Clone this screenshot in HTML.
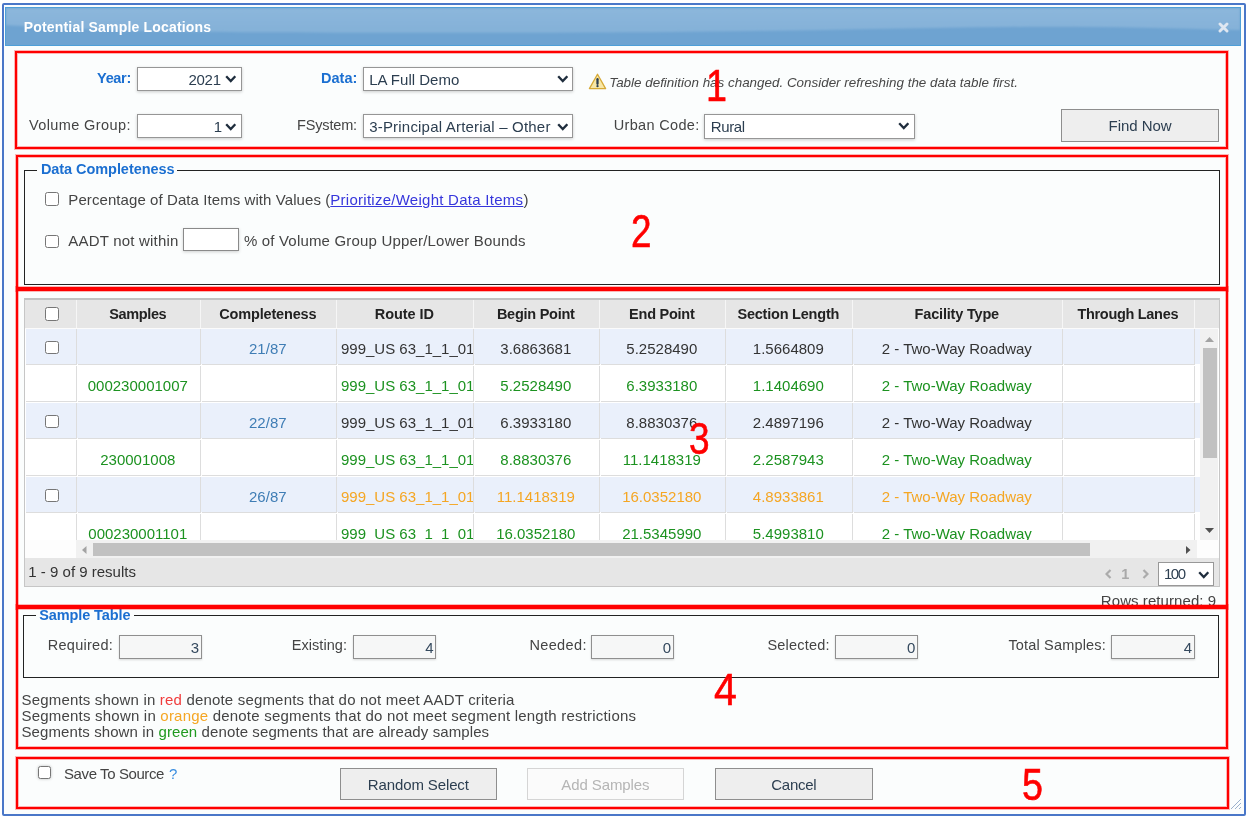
<!DOCTYPE html>
<html><head><meta charset="utf-8"><title>Potential Sample Locations</title>
<style>
html,body{margin:0;padding:0;background:#ffffff;width:1250px;height:816px;overflow:hidden;font-family:"Liberation Sans", sans-serif;}
div,span,svg{box-sizing:content-box;}
</style></head><body>
<div style="position:relative;width:1250px;height:816px;overflow:hidden;will-change:transform">
<div style="position:absolute;left:2px;top:3px;width:1240px;height:809px;border:2px solid #4a77c8;border-radius:2px;background:#fbfdfd;"></div>
<div style="position:absolute;left:5px;top:7px;width:1234px;height:37px;border:1px solid #4e9fd8;background:#6ea3d1;"></div>
<svg style="position:absolute;left:6px;top:8px" width="1234" height="37" viewBox="0 0 1234 37"><defs><linearGradient id="hg" x1="0" y1="0" x2="0" y2="1"><stop offset="0" stop-color="#8cb7db"/><stop offset="1" stop-color="#84b1d8"/></linearGradient><filter id="hb" x="-1%" y="-20%" width="102%" height="140%"><feGaussianBlur stdDeviation="1.1"/></filter></defs><path d="M0 0H1234V22C1150 20 1080 18 1000 19C880 20 760 24 600 24.5C420 25 250 25 140 23C80 21.5 30 19 0 17Z" fill="url(#hg)" filter="url(#hb)"/></svg>
<span style="position:absolute;font-family:'Liberation Sans',sans-serif;top:19.95px;font-size:14.00px;line-height:14.00px;color:#ffffff;font-weight:bold;font-style:normal;white-space:nowrap;letter-spacing:0.184px;left:23.70px;">Potential Sample Locations</span>
<svg style="position:absolute;left:1218px;top:22px" width="11" height="11" viewBox="0 0 11 11"><path d="M2 2L9 9M9 2L2 9" stroke="#dfe7f1" stroke-width="2.9" stroke-linecap="round"/></svg>
<div style="position:absolute;left:137px;top:67px;width:103px;height:22px;border:1px solid #969696;background:#fff;box-shadow:0 1px 3px rgba(0,0,0,0.2);"></div>
<span style="position:absolute;font-family:'Liberation Sans',sans-serif;top:72.10px;font-size:15.00px;line-height:15.00px;color:#2c3e50;font-weight:normal;font-style:normal;white-space:nowrap;letter-spacing:-0.294px;left:188.50px;">2021</span>
<svg style="position:absolute;left:225.4px;top:75px" width="11.5" height="8" viewBox="0 0 11.5 8"><path d="M1.2 1.2L5.75 6L10.3 1.2" fill="none" stroke="#1f2d3d" stroke-width="2.3"/></svg>
<span style="position:absolute;font-family:'Liberation Sans',sans-serif;top:70.93px;font-size:14.50px;line-height:14.50px;color:#1b6fd1;font-weight:bold;font-style:normal;white-space:nowrap;letter-spacing:-0.337px;left:97.10px;">Year:</span>
<span style="position:absolute;font-family:'Liberation Sans',sans-serif;top:70.93px;font-size:14.50px;line-height:14.50px;color:#1b6fd1;font-weight:bold;font-style:normal;white-space:nowrap;letter-spacing:0.007px;left:321.00px;">Data:</span>
<div style="position:absolute;left:363px;top:67px;width:208px;height:22px;border:1px solid #969696;background:#fff;box-shadow:0 1px 3px rgba(0,0,0,0.2);"></div>
<span style="position:absolute;font-family:'Liberation Sans',sans-serif;top:72.10px;font-size:15.00px;line-height:15.00px;color:#2c3e50;font-weight:normal;font-style:normal;white-space:nowrap;letter-spacing:0.000px;left:369.20px;">LA Full Demo</span>
<svg style="position:absolute;left:556.8px;top:75px" width="11.5" height="8" viewBox="0 0 11.5 8"><path d="M1.2 1.2L5.75 6L10.3 1.2" fill="none" stroke="#1f2d3d" stroke-width="2.3"/></svg>
<svg style="position:absolute;left:588px;top:73px" width="19" height="17" viewBox="0 0 19 17"><path d="M9.5 1.3L17.6 15.6H1.4Z" fill="#f8e7a6" stroke="#d6a936" stroke-width="1.3" stroke-linejoin="round"/><path d="M9.5 6.2V10.8" stroke="#2d3e50" stroke-width="2.3" stroke-linecap="round"/><circle cx="9.5" cy="13.2" r="1.15" fill="#2d3e50"/></svg>
<span style="position:absolute;font-family:'Liberation Sans',sans-serif;top:76.46px;font-size:13.40px;line-height:13.40px;color:#474747;font-weight:normal;font-style:italic;white-space:nowrap;letter-spacing:0.009px;left:609.20px;">Table definition has changed. Consider refreshing the data table first.</span>
<span style="position:absolute;font-family:'Liberation Sans',sans-serif;top:117.73px;font-size:14.50px;line-height:14.50px;color:#444444;font-weight:normal;font-style:normal;white-space:nowrap;letter-spacing:0.405px;left:28.90px;">Volume Group:</span>
<div style="position:absolute;left:137px;top:114px;width:103px;height:22px;border:1px solid #969696;background:#fff;box-shadow:0 1px 3px rgba(0,0,0,0.2);"></div>
<span style="position:absolute;font-family:'Liberation Sans',sans-serif;top:118.80px;font-size:15.00px;line-height:15.00px;color:#2c3e50;font-weight:normal;font-style:normal;white-space:nowrap;letter-spacing:0.000px;left:213.80px;">1</span>
<svg style="position:absolute;left:225.4px;top:122.5px" width="11.5" height="8" viewBox="0 0 11.5 8"><path d="M1.2 1.2L5.75 6L10.3 1.2" fill="none" stroke="#1f2d3d" stroke-width="2.3"/></svg>
<span style="position:absolute;font-family:'Liberation Sans',sans-serif;top:118.23px;font-size:14.50px;line-height:14.50px;color:#444444;font-weight:normal;font-style:normal;white-space:nowrap;letter-spacing:-0.154px;left:297.00px;">FSystem:</span>
<div style="position:absolute;left:363px;top:114px;width:208px;height:22px;border:1px solid #969696;background:#fff;box-shadow:0 1px 3px rgba(0,0,0,0.2);"></div>
<span style="position:absolute;font-family:'Liberation Sans',sans-serif;top:119.30px;font-size:15.00px;line-height:15.00px;color:#2c3e50;font-weight:normal;font-style:normal;white-space:nowrap;letter-spacing:0.196px;left:369.20px;">3-Principal Arterial – Other</span>
<svg style="position:absolute;left:556.8px;top:122.5px" width="11.5" height="8" viewBox="0 0 11.5 8"><path d="M1.2 1.2L5.75 6L10.3 1.2" fill="none" stroke="#1f2d3d" stroke-width="2.3"/></svg>
<span style="position:absolute;font-family:'Liberation Sans',sans-serif;top:117.93px;font-size:14.50px;line-height:14.50px;color:#444444;font-weight:normal;font-style:normal;white-space:nowrap;letter-spacing:0.316px;left:613.80px;">Urban Code:</span>
<div style="position:absolute;left:704px;top:114px;width:209px;height:23px;border:1px solid #969696;background:#fff;box-shadow:0 1px 3px rgba(0,0,0,0.2);"></div>
<span style="position:absolute;font-family:'Liberation Sans',sans-serif;top:118.80px;font-size:15.00px;line-height:15.00px;color:#2c3e50;font-weight:normal;font-style:normal;white-space:nowrap;letter-spacing:-0.392px;left:710.80px;">Rural</span>
<svg style="position:absolute;left:897.8px;top:121.5px" width="11.5" height="8" viewBox="0 0 11.5 8"><path d="M1.2 1.2L5.75 6L10.3 1.2" fill="none" stroke="#1f2d3d" stroke-width="2.3"/></svg>
<div style="position:absolute;left:1061px;top:109.4px;width:155.6px;height:31px;border:1px solid #8e8e8e;background:#eeeeee;"></div>
<span style="position:absolute;font-family:'Liberation Sans',sans-serif;top:118.30px;font-size:15.00px;line-height:15.00px;color:#2c3e50;font-weight:normal;font-style:normal;white-space:nowrap;letter-spacing:-0.045px;left:1108.60px;">Find Now</span>
<span style="position:absolute;font-family:'Liberation Sans',sans-serif;top:63.97px;font-size:44.69px;line-height:44.69px;color:#ff0000;font-weight:normal;font-style:normal;white-space:nowrap;letter-spacing:0.000px;transform-origin:0 0;transform:scaleX(0.845);-webkit-text-stroke:0.6px #ff0000;left:706.00px;">1</span>
<div style="position:absolute;left:24px;top:170px;width:1194px;height:113px;border:1px solid #222;"></div>
<div style="position:absolute;left:37px;top:160px;width:140px;height:16px;background:#fbfdfd;"></div>
<span style="position:absolute;font-family:'Liberation Sans',sans-serif;top:162.13px;font-size:14.50px;line-height:14.50px;color:#1b6fd1;font-weight:bold;font-style:normal;white-space:nowrap;letter-spacing:-0.058px;left:40.90px;">Data Completeness</span>
<div style="position:absolute;left:45.2px;top:192.4px;width:11.5px;height:11.5px;border:1px solid #767676;border-radius:2.5px;background:#fff;"></div>
<span style="position:absolute;font-family:'Liberation Sans',sans-serif;top:192.00px;font-size:15.00px;line-height:15.00px;color:#444444;font-weight:normal;font-style:normal;white-space:nowrap;letter-spacing:0.079px;left:68.30px;">Percentage of Data Items with Values (</span>
<span style="position:absolute;font-family:'Liberation Sans',sans-serif;top:192.00px;font-size:15.00px;line-height:15.00px;color:#3636dc;font-weight:normal;font-style:normal;white-space:nowrap;letter-spacing:0.263px;text-decoration:underline;left:330.30px;">Prioritize/Weight Data Items</span>
<span style="position:absolute;font-family:'Liberation Sans',sans-serif;top:192.00px;font-size:15.00px;line-height:15.00px;color:#444444;font-weight:normal;font-style:normal;white-space:nowrap;letter-spacing:0.000px;left:523.50px;">)</span>
<div style="position:absolute;left:45.2px;top:234.6px;width:11.5px;height:11.5px;border:1px solid #767676;border-radius:2.5px;background:#fff;"></div>
<span style="position:absolute;font-family:'Liberation Sans',sans-serif;top:233.00px;font-size:15.00px;line-height:15.00px;color:#444444;font-weight:normal;font-style:normal;white-space:nowrap;letter-spacing:0.195px;left:68.30px;">AADT not within</span>
<div style="position:absolute;left:182.6px;top:228.4px;width:54.4px;height:21.1px;border:1px solid #8a8a8a;background:#fff;box-shadow:0 1px 3px rgba(0,0,0,0.18);"></div>
<span style="position:absolute;font-family:'Liberation Sans',sans-serif;top:233.00px;font-size:15.00px;line-height:15.00px;color:#444444;font-weight:normal;font-style:normal;white-space:nowrap;letter-spacing:0.185px;left:243.90px;">% of Volume Group Upper/Lower Bounds</span>
<span style="position:absolute;font-family:'Liberation Sans',sans-serif;top:208.60px;font-size:45.95px;line-height:45.95px;color:#ff0000;font-weight:normal;font-style:normal;white-space:nowrap;letter-spacing:0.000px;transform-origin:0 0;transform:scaleX(0.802);-webkit-text-stroke:0.6px #ff0000;left:630.70px;">2</span>
<div style="position:absolute;left:24px;top:298px;width:1194px;height:286px;border:1px solid #c6c6c6;border-top:2px solid #c2c2c2;background:#ffffff;"></div>
<div style="position:absolute;left:25px;top:300px;width:1194px;height:28px;background:#e6e6e6;"></div>
<div style="position:absolute;left:76px;top:300px;width:1px;height:28px;background:#f6f6f6;"></div>
<div style="position:absolute;left:200px;top:300px;width:1px;height:28px;background:#f6f6f6;"></div>
<div style="position:absolute;left:336px;top:300px;width:1px;height:28px;background:#f6f6f6;"></div>
<div style="position:absolute;left:473px;top:300px;width:1px;height:28px;background:#f6f6f6;"></div>
<div style="position:absolute;left:599px;top:300px;width:1px;height:28px;background:#f6f6f6;"></div>
<div style="position:absolute;left:725px;top:300px;width:1px;height:28px;background:#f6f6f6;"></div>
<div style="position:absolute;left:852px;top:300px;width:1px;height:28px;background:#f6f6f6;"></div>
<div style="position:absolute;left:1062px;top:300px;width:1px;height:28px;background:#f6f6f6;"></div>
<div style="position:absolute;left:1194px;top:300px;width:1px;height:28px;background:#f6f6f6;"></div>
<div style="position:absolute;left:25px;top:328px;width:1194px;height:1px;background:#fbfbfb;"></div>
<span style="position:absolute;font-family:'Liberation Sans',sans-serif;top:306.83px;font-size:14.50px;line-height:14.50px;color:#222222;font-weight:bold;font-style:normal;white-space:nowrap;letter-spacing:-0.379px;left:137.80px;transform:translateX(-50%);">Samples</span>
<span style="position:absolute;font-family:'Liberation Sans',sans-serif;top:306.83px;font-size:14.50px;line-height:14.50px;color:#222222;font-weight:bold;font-style:normal;white-space:nowrap;letter-spacing:-0.177px;left:267.80px;transform:translateX(-50%);">Completeness</span>
<span style="position:absolute;font-family:'Liberation Sans',sans-serif;top:306.83px;font-size:14.50px;line-height:14.50px;color:#222222;font-weight:bold;font-style:normal;white-space:nowrap;letter-spacing:-0.076px;left:404.30px;transform:translateX(-50%);">Route ID</span>
<span style="position:absolute;font-family:'Liberation Sans',sans-serif;top:306.83px;font-size:14.50px;line-height:14.50px;color:#222222;font-weight:bold;font-style:normal;white-space:nowrap;letter-spacing:-0.251px;left:535.80px;transform:translateX(-50%);">Begin Point</span>
<span style="position:absolute;font-family:'Liberation Sans',sans-serif;top:306.83px;font-size:14.50px;line-height:14.50px;color:#222222;font-weight:bold;font-style:normal;white-space:nowrap;letter-spacing:-0.252px;left:661.80px;transform:translateX(-50%);">End Point</span>
<span style="position:absolute;font-family:'Liberation Sans',sans-serif;top:306.83px;font-size:14.50px;line-height:14.50px;color:#222222;font-weight:bold;font-style:normal;white-space:nowrap;letter-spacing:-0.217px;left:788.30px;transform:translateX(-50%);">Section Length</span>
<span style="position:absolute;font-family:'Liberation Sans',sans-serif;top:306.83px;font-size:14.50px;line-height:14.50px;color:#222222;font-weight:bold;font-style:normal;white-space:nowrap;letter-spacing:-0.182px;left:956.80px;transform:translateX(-50%);">Facility Type</span>
<span style="position:absolute;font-family:'Liberation Sans',sans-serif;top:306.83px;font-size:14.50px;line-height:14.50px;color:#222222;font-weight:bold;font-style:normal;white-space:nowrap;letter-spacing:-0.303px;left:1127.80px;transform:translateX(-50%);">Through Lanes</span>
<div style="position:absolute;left:45.2px;top:307px;width:11.5px;height:11.5px;border:1px solid #767676;border-radius:2.5px;background:#fff;"></div>
<div style="position:absolute;left:25px;top:329px;width:1175px;height:211px;overflow:hidden">
<div style="position:absolute;left:1px;top:0px;width:1174px;height:35px;background:#eaf0fb;"></div>
<div style="position:absolute;left:51px;top:0px;width:1px;height:35px;background:#dddddd;"></div>
<div style="position:absolute;left:1px;top:35px;width:51px;height:1px;background:#dddddd;"></div>
<div style="position:absolute;left:175px;top:0px;width:1px;height:35px;background:#dddddd;"></div>
<div style="position:absolute;left:53px;top:35px;width:123px;height:1px;background:#dddddd;"></div>
<div style="position:absolute;left:311px;top:0px;width:1px;height:35px;background:#dddddd;"></div>
<div style="position:absolute;left:177px;top:35px;width:135px;height:1px;background:#dddddd;"></div>
<div style="position:absolute;left:448px;top:0px;width:1px;height:35px;background:#dddddd;"></div>
<div style="position:absolute;left:313px;top:35px;width:136px;height:1px;background:#dddddd;"></div>
<div style="position:absolute;left:574px;top:0px;width:1px;height:35px;background:#dddddd;"></div>
<div style="position:absolute;left:450px;top:35px;width:125px;height:1px;background:#dddddd;"></div>
<div style="position:absolute;left:700px;top:0px;width:1px;height:35px;background:#dddddd;"></div>
<div style="position:absolute;left:576px;top:35px;width:125px;height:1px;background:#dddddd;"></div>
<div style="position:absolute;left:827px;top:0px;width:1px;height:35px;background:#dddddd;"></div>
<div style="position:absolute;left:702px;top:35px;width:126px;height:1px;background:#dddddd;"></div>
<div style="position:absolute;left:1037px;top:0px;width:1px;height:35px;background:#dddddd;"></div>
<div style="position:absolute;left:829px;top:35px;width:209px;height:1px;background:#dddddd;"></div>
<div style="position:absolute;left:1169px;top:0px;width:1px;height:35px;background:#dddddd;"></div>
<div style="position:absolute;left:1039px;top:35px;width:131px;height:1px;background:#dddddd;"></div>
<div style="position:absolute;left:1px;top:37px;width:1174px;height:35px;background:#ffffff;"></div>
<div style="position:absolute;left:51px;top:37px;width:1px;height:35px;background:#dddddd;"></div>
<div style="position:absolute;left:1px;top:72px;width:51px;height:1px;background:#dddddd;"></div>
<div style="position:absolute;left:175px;top:37px;width:1px;height:35px;background:#dddddd;"></div>
<div style="position:absolute;left:53px;top:72px;width:123px;height:1px;background:#dddddd;"></div>
<div style="position:absolute;left:311px;top:37px;width:1px;height:35px;background:#dddddd;"></div>
<div style="position:absolute;left:177px;top:72px;width:135px;height:1px;background:#dddddd;"></div>
<div style="position:absolute;left:448px;top:37px;width:1px;height:35px;background:#dddddd;"></div>
<div style="position:absolute;left:313px;top:72px;width:136px;height:1px;background:#dddddd;"></div>
<div style="position:absolute;left:574px;top:37px;width:1px;height:35px;background:#dddddd;"></div>
<div style="position:absolute;left:450px;top:72px;width:125px;height:1px;background:#dddddd;"></div>
<div style="position:absolute;left:700px;top:37px;width:1px;height:35px;background:#dddddd;"></div>
<div style="position:absolute;left:576px;top:72px;width:125px;height:1px;background:#dddddd;"></div>
<div style="position:absolute;left:827px;top:37px;width:1px;height:35px;background:#dddddd;"></div>
<div style="position:absolute;left:702px;top:72px;width:126px;height:1px;background:#dddddd;"></div>
<div style="position:absolute;left:1037px;top:37px;width:1px;height:35px;background:#dddddd;"></div>
<div style="position:absolute;left:829px;top:72px;width:209px;height:1px;background:#dddddd;"></div>
<div style="position:absolute;left:1169px;top:37px;width:1px;height:35px;background:#dddddd;"></div>
<div style="position:absolute;left:1039px;top:72px;width:131px;height:1px;background:#dddddd;"></div>
<div style="position:absolute;left:1px;top:74px;width:1174px;height:35px;background:#eaf0fb;"></div>
<div style="position:absolute;left:51px;top:74px;width:1px;height:35px;background:#dddddd;"></div>
<div style="position:absolute;left:1px;top:109px;width:51px;height:1px;background:#dddddd;"></div>
<div style="position:absolute;left:175px;top:74px;width:1px;height:35px;background:#dddddd;"></div>
<div style="position:absolute;left:53px;top:109px;width:123px;height:1px;background:#dddddd;"></div>
<div style="position:absolute;left:311px;top:74px;width:1px;height:35px;background:#dddddd;"></div>
<div style="position:absolute;left:177px;top:109px;width:135px;height:1px;background:#dddddd;"></div>
<div style="position:absolute;left:448px;top:74px;width:1px;height:35px;background:#dddddd;"></div>
<div style="position:absolute;left:313px;top:109px;width:136px;height:1px;background:#dddddd;"></div>
<div style="position:absolute;left:574px;top:74px;width:1px;height:35px;background:#dddddd;"></div>
<div style="position:absolute;left:450px;top:109px;width:125px;height:1px;background:#dddddd;"></div>
<div style="position:absolute;left:700px;top:74px;width:1px;height:35px;background:#dddddd;"></div>
<div style="position:absolute;left:576px;top:109px;width:125px;height:1px;background:#dddddd;"></div>
<div style="position:absolute;left:827px;top:74px;width:1px;height:35px;background:#dddddd;"></div>
<div style="position:absolute;left:702px;top:109px;width:126px;height:1px;background:#dddddd;"></div>
<div style="position:absolute;left:1037px;top:74px;width:1px;height:35px;background:#dddddd;"></div>
<div style="position:absolute;left:829px;top:109px;width:209px;height:1px;background:#dddddd;"></div>
<div style="position:absolute;left:1169px;top:74px;width:1px;height:35px;background:#dddddd;"></div>
<div style="position:absolute;left:1039px;top:109px;width:131px;height:1px;background:#dddddd;"></div>
<div style="position:absolute;left:1px;top:111px;width:1174px;height:35px;background:#ffffff;"></div>
<div style="position:absolute;left:51px;top:111px;width:1px;height:35px;background:#dddddd;"></div>
<div style="position:absolute;left:1px;top:146px;width:51px;height:1px;background:#dddddd;"></div>
<div style="position:absolute;left:175px;top:111px;width:1px;height:35px;background:#dddddd;"></div>
<div style="position:absolute;left:53px;top:146px;width:123px;height:1px;background:#dddddd;"></div>
<div style="position:absolute;left:311px;top:111px;width:1px;height:35px;background:#dddddd;"></div>
<div style="position:absolute;left:177px;top:146px;width:135px;height:1px;background:#dddddd;"></div>
<div style="position:absolute;left:448px;top:111px;width:1px;height:35px;background:#dddddd;"></div>
<div style="position:absolute;left:313px;top:146px;width:136px;height:1px;background:#dddddd;"></div>
<div style="position:absolute;left:574px;top:111px;width:1px;height:35px;background:#dddddd;"></div>
<div style="position:absolute;left:450px;top:146px;width:125px;height:1px;background:#dddddd;"></div>
<div style="position:absolute;left:700px;top:111px;width:1px;height:35px;background:#dddddd;"></div>
<div style="position:absolute;left:576px;top:146px;width:125px;height:1px;background:#dddddd;"></div>
<div style="position:absolute;left:827px;top:111px;width:1px;height:35px;background:#dddddd;"></div>
<div style="position:absolute;left:702px;top:146px;width:126px;height:1px;background:#dddddd;"></div>
<div style="position:absolute;left:1037px;top:111px;width:1px;height:35px;background:#dddddd;"></div>
<div style="position:absolute;left:829px;top:146px;width:209px;height:1px;background:#dddddd;"></div>
<div style="position:absolute;left:1169px;top:111px;width:1px;height:35px;background:#dddddd;"></div>
<div style="position:absolute;left:1039px;top:146px;width:131px;height:1px;background:#dddddd;"></div>
<div style="position:absolute;left:1px;top:148px;width:1174px;height:35px;background:#eaf0fb;"></div>
<div style="position:absolute;left:51px;top:148px;width:1px;height:35px;background:#dddddd;"></div>
<div style="position:absolute;left:1px;top:183px;width:51px;height:1px;background:#dddddd;"></div>
<div style="position:absolute;left:175px;top:148px;width:1px;height:35px;background:#dddddd;"></div>
<div style="position:absolute;left:53px;top:183px;width:123px;height:1px;background:#dddddd;"></div>
<div style="position:absolute;left:311px;top:148px;width:1px;height:35px;background:#dddddd;"></div>
<div style="position:absolute;left:177px;top:183px;width:135px;height:1px;background:#dddddd;"></div>
<div style="position:absolute;left:448px;top:148px;width:1px;height:35px;background:#dddddd;"></div>
<div style="position:absolute;left:313px;top:183px;width:136px;height:1px;background:#dddddd;"></div>
<div style="position:absolute;left:574px;top:148px;width:1px;height:35px;background:#dddddd;"></div>
<div style="position:absolute;left:450px;top:183px;width:125px;height:1px;background:#dddddd;"></div>
<div style="position:absolute;left:700px;top:148px;width:1px;height:35px;background:#dddddd;"></div>
<div style="position:absolute;left:576px;top:183px;width:125px;height:1px;background:#dddddd;"></div>
<div style="position:absolute;left:827px;top:148px;width:1px;height:35px;background:#dddddd;"></div>
<div style="position:absolute;left:702px;top:183px;width:126px;height:1px;background:#dddddd;"></div>
<div style="position:absolute;left:1037px;top:148px;width:1px;height:35px;background:#dddddd;"></div>
<div style="position:absolute;left:829px;top:183px;width:209px;height:1px;background:#dddddd;"></div>
<div style="position:absolute;left:1169px;top:148px;width:1px;height:35px;background:#dddddd;"></div>
<div style="position:absolute;left:1039px;top:183px;width:131px;height:1px;background:#dddddd;"></div>
<div style="position:absolute;left:1px;top:185px;width:1174px;height:35px;background:#ffffff;"></div>
<div style="position:absolute;left:51px;top:185px;width:1px;height:35px;background:#dddddd;"></div>
<div style="position:absolute;left:1px;top:220px;width:51px;height:1px;background:#dddddd;"></div>
<div style="position:absolute;left:175px;top:185px;width:1px;height:35px;background:#dddddd;"></div>
<div style="position:absolute;left:53px;top:220px;width:123px;height:1px;background:#dddddd;"></div>
<div style="position:absolute;left:311px;top:185px;width:1px;height:35px;background:#dddddd;"></div>
<div style="position:absolute;left:177px;top:220px;width:135px;height:1px;background:#dddddd;"></div>
<div style="position:absolute;left:448px;top:185px;width:1px;height:35px;background:#dddddd;"></div>
<div style="position:absolute;left:313px;top:220px;width:136px;height:1px;background:#dddddd;"></div>
<div style="position:absolute;left:574px;top:185px;width:1px;height:35px;background:#dddddd;"></div>
<div style="position:absolute;left:450px;top:220px;width:125px;height:1px;background:#dddddd;"></div>
<div style="position:absolute;left:700px;top:185px;width:1px;height:35px;background:#dddddd;"></div>
<div style="position:absolute;left:576px;top:220px;width:125px;height:1px;background:#dddddd;"></div>
<div style="position:absolute;left:827px;top:185px;width:1px;height:35px;background:#dddddd;"></div>
<div style="position:absolute;left:702px;top:220px;width:126px;height:1px;background:#dddddd;"></div>
<div style="position:absolute;left:1037px;top:185px;width:1px;height:35px;background:#dddddd;"></div>
<div style="position:absolute;left:829px;top:220px;width:209px;height:1px;background:#dddddd;"></div>
<div style="position:absolute;left:1169px;top:185px;width:1px;height:35px;background:#dddddd;"></div>
<div style="position:absolute;left:1039px;top:220px;width:131px;height:1px;background:#dddddd;"></div>
</div>
<div style="position:absolute;left:45.2px;top:340.5px;width:11.5px;height:11.5px;border:1px solid #767676;border-radius:2.5px;background:#fff;"></div>
<span style="position:absolute;font-family:'Liberation Sans',sans-serif;top:341.30px;font-size:15.00px;line-height:15.00px;color:#3f7db5;font-weight:normal;font-style:normal;white-space:nowrap;letter-spacing:0.000px;left:267.80px;transform:translateX(-50%);">21/87</span>
<span style="position:absolute;font-family:'Liberation Sans',sans-serif;top:341.30px;font-size:15.00px;line-height:15.00px;color:#333333;font-weight:normal;font-style:normal;white-space:nowrap;letter-spacing:0.000px;width:132px;overflow:hidden;padding-bottom:4px;left:341.00px;">999_US 63_1_1_01</span>
<span style="position:absolute;font-family:'Liberation Sans',sans-serif;top:341.30px;font-size:15.00px;line-height:15.00px;color:#333333;font-weight:normal;font-style:normal;white-space:nowrap;letter-spacing:0.000px;left:535.80px;transform:translateX(-50%);">3.6863681</span>
<span style="position:absolute;font-family:'Liberation Sans',sans-serif;top:341.30px;font-size:15.00px;line-height:15.00px;color:#333333;font-weight:normal;font-style:normal;white-space:nowrap;letter-spacing:0.000px;left:661.80px;transform:translateX(-50%);">5.2528490</span>
<span style="position:absolute;font-family:'Liberation Sans',sans-serif;top:341.30px;font-size:15.00px;line-height:15.00px;color:#333333;font-weight:normal;font-style:normal;white-space:nowrap;letter-spacing:0.000px;left:788.30px;transform:translateX(-50%);">1.5664809</span>
<span style="position:absolute;font-family:'Liberation Sans',sans-serif;top:341.30px;font-size:15.00px;line-height:15.00px;color:#333333;font-weight:normal;font-style:normal;white-space:nowrap;letter-spacing:0.000px;left:956.80px;transform:translateX(-50%);">2 - Two-Way Roadway</span>
<span style="position:absolute;font-family:'Liberation Sans',sans-serif;top:378.30px;font-size:15.00px;line-height:15.00px;color:#1c9220;font-weight:normal;font-style:normal;white-space:nowrap;letter-spacing:0.000px;left:137.80px;transform:translateX(-50%);">000230001007</span>
<span style="position:absolute;font-family:'Liberation Sans',sans-serif;top:378.30px;font-size:15.00px;line-height:15.00px;color:#1c9220;font-weight:normal;font-style:normal;white-space:nowrap;letter-spacing:0.000px;width:132px;overflow:hidden;padding-bottom:4px;left:341.00px;">999_US 63_1_1_01</span>
<span style="position:absolute;font-family:'Liberation Sans',sans-serif;top:378.30px;font-size:15.00px;line-height:15.00px;color:#1c9220;font-weight:normal;font-style:normal;white-space:nowrap;letter-spacing:0.000px;left:535.80px;transform:translateX(-50%);">5.2528490</span>
<span style="position:absolute;font-family:'Liberation Sans',sans-serif;top:378.30px;font-size:15.00px;line-height:15.00px;color:#1c9220;font-weight:normal;font-style:normal;white-space:nowrap;letter-spacing:0.000px;left:661.80px;transform:translateX(-50%);">6.3933180</span>
<span style="position:absolute;font-family:'Liberation Sans',sans-serif;top:378.30px;font-size:15.00px;line-height:15.00px;color:#1c9220;font-weight:normal;font-style:normal;white-space:nowrap;letter-spacing:0.000px;left:788.30px;transform:translateX(-50%);">1.1404690</span>
<span style="position:absolute;font-family:'Liberation Sans',sans-serif;top:378.30px;font-size:15.00px;line-height:15.00px;color:#1c9220;font-weight:normal;font-style:normal;white-space:nowrap;letter-spacing:0.000px;left:956.80px;transform:translateX(-50%);">2 - Two-Way Roadway</span>
<div style="position:absolute;left:45.2px;top:414.5px;width:11.5px;height:11.5px;border:1px solid #767676;border-radius:2.5px;background:#fff;"></div>
<span style="position:absolute;font-family:'Liberation Sans',sans-serif;top:415.30px;font-size:15.00px;line-height:15.00px;color:#3f7db5;font-weight:normal;font-style:normal;white-space:nowrap;letter-spacing:0.000px;left:267.80px;transform:translateX(-50%);">22/87</span>
<span style="position:absolute;font-family:'Liberation Sans',sans-serif;top:415.30px;font-size:15.00px;line-height:15.00px;color:#333333;font-weight:normal;font-style:normal;white-space:nowrap;letter-spacing:0.000px;width:132px;overflow:hidden;padding-bottom:4px;left:341.00px;">999_US 63_1_1_01</span>
<span style="position:absolute;font-family:'Liberation Sans',sans-serif;top:415.30px;font-size:15.00px;line-height:15.00px;color:#333333;font-weight:normal;font-style:normal;white-space:nowrap;letter-spacing:0.000px;left:535.80px;transform:translateX(-50%);">6.3933180</span>
<span style="position:absolute;font-family:'Liberation Sans',sans-serif;top:415.30px;font-size:15.00px;line-height:15.00px;color:#333333;font-weight:normal;font-style:normal;white-space:nowrap;letter-spacing:0.000px;left:661.80px;transform:translateX(-50%);">8.8830376</span>
<span style="position:absolute;font-family:'Liberation Sans',sans-serif;top:415.30px;font-size:15.00px;line-height:15.00px;color:#333333;font-weight:normal;font-style:normal;white-space:nowrap;letter-spacing:0.000px;left:788.30px;transform:translateX(-50%);">2.4897196</span>
<span style="position:absolute;font-family:'Liberation Sans',sans-serif;top:415.30px;font-size:15.00px;line-height:15.00px;color:#333333;font-weight:normal;font-style:normal;white-space:nowrap;letter-spacing:0.000px;left:956.80px;transform:translateX(-50%);">2 - Two-Way Roadway</span>
<span style="position:absolute;font-family:'Liberation Sans',sans-serif;top:452.30px;font-size:15.00px;line-height:15.00px;color:#1c9220;font-weight:normal;font-style:normal;white-space:nowrap;letter-spacing:0.000px;left:137.80px;transform:translateX(-50%);">230001008</span>
<span style="position:absolute;font-family:'Liberation Sans',sans-serif;top:452.30px;font-size:15.00px;line-height:15.00px;color:#1c9220;font-weight:normal;font-style:normal;white-space:nowrap;letter-spacing:0.000px;width:132px;overflow:hidden;padding-bottom:4px;left:341.00px;">999_US 63_1_1_01</span>
<span style="position:absolute;font-family:'Liberation Sans',sans-serif;top:452.30px;font-size:15.00px;line-height:15.00px;color:#1c9220;font-weight:normal;font-style:normal;white-space:nowrap;letter-spacing:0.000px;left:535.80px;transform:translateX(-50%);">8.8830376</span>
<span style="position:absolute;font-family:'Liberation Sans',sans-serif;top:452.30px;font-size:15.00px;line-height:15.00px;color:#1c9220;font-weight:normal;font-style:normal;white-space:nowrap;letter-spacing:0.000px;left:661.80px;transform:translateX(-50%);">11.1418319</span>
<span style="position:absolute;font-family:'Liberation Sans',sans-serif;top:452.30px;font-size:15.00px;line-height:15.00px;color:#1c9220;font-weight:normal;font-style:normal;white-space:nowrap;letter-spacing:0.000px;left:788.30px;transform:translateX(-50%);">2.2587943</span>
<span style="position:absolute;font-family:'Liberation Sans',sans-serif;top:452.30px;font-size:15.00px;line-height:15.00px;color:#1c9220;font-weight:normal;font-style:normal;white-space:nowrap;letter-spacing:0.000px;left:956.80px;transform:translateX(-50%);">2 - Two-Way Roadway</span>
<div style="position:absolute;left:45.2px;top:488.5px;width:11.5px;height:11.5px;border:1px solid #767676;border-radius:2.5px;background:#fff;"></div>
<span style="position:absolute;font-family:'Liberation Sans',sans-serif;top:489.30px;font-size:15.00px;line-height:15.00px;color:#3f7db5;font-weight:normal;font-style:normal;white-space:nowrap;letter-spacing:0.000px;left:267.80px;transform:translateX(-50%);">26/87</span>
<span style="position:absolute;font-family:'Liberation Sans',sans-serif;top:489.30px;font-size:15.00px;line-height:15.00px;color:#f5a623;font-weight:normal;font-style:normal;white-space:nowrap;letter-spacing:0.000px;width:132px;overflow:hidden;padding-bottom:4px;left:341.00px;">999_US 63_1_1_01</span>
<span style="position:absolute;font-family:'Liberation Sans',sans-serif;top:489.30px;font-size:15.00px;line-height:15.00px;color:#f5a623;font-weight:normal;font-style:normal;white-space:nowrap;letter-spacing:0.000px;left:535.80px;transform:translateX(-50%);">11.1418319</span>
<span style="position:absolute;font-family:'Liberation Sans',sans-serif;top:489.30px;font-size:15.00px;line-height:15.00px;color:#f5a623;font-weight:normal;font-style:normal;white-space:nowrap;letter-spacing:0.000px;left:661.80px;transform:translateX(-50%);">16.0352180</span>
<span style="position:absolute;font-family:'Liberation Sans',sans-serif;top:489.30px;font-size:15.00px;line-height:15.00px;color:#f5a623;font-weight:normal;font-style:normal;white-space:nowrap;letter-spacing:0.000px;left:788.30px;transform:translateX(-50%);">4.8933861</span>
<span style="position:absolute;font-family:'Liberation Sans',sans-serif;top:489.30px;font-size:15.00px;line-height:15.00px;color:#f5a623;font-weight:normal;font-style:normal;white-space:nowrap;letter-spacing:0.000px;left:956.80px;transform:translateX(-50%);">2 - Two-Way Roadway</span>
<span style="position:absolute;font-family:'Liberation Sans',sans-serif;top:526.30px;font-size:15.00px;line-height:15.00px;color:#1c9220;font-weight:normal;font-style:normal;white-space:nowrap;letter-spacing:0.000px;left:137.80px;transform:translateX(-50%);">000230001101</span>
<span style="position:absolute;font-family:'Liberation Sans',sans-serif;top:526.30px;font-size:15.00px;line-height:15.00px;color:#1c9220;font-weight:normal;font-style:normal;white-space:nowrap;letter-spacing:0.000px;width:132px;overflow:hidden;padding-bottom:4px;left:341.00px;">999_US 63_1_1_01</span>
<span style="position:absolute;font-family:'Liberation Sans',sans-serif;top:526.30px;font-size:15.00px;line-height:15.00px;color:#1c9220;font-weight:normal;font-style:normal;white-space:nowrap;letter-spacing:0.000px;left:535.80px;transform:translateX(-50%);">16.0352180</span>
<span style="position:absolute;font-family:'Liberation Sans',sans-serif;top:526.30px;font-size:15.00px;line-height:15.00px;color:#1c9220;font-weight:normal;font-style:normal;white-space:nowrap;letter-spacing:0.000px;left:661.80px;transform:translateX(-50%);">21.5345990</span>
<span style="position:absolute;font-family:'Liberation Sans',sans-serif;top:526.30px;font-size:15.00px;line-height:15.00px;color:#1c9220;font-weight:normal;font-style:normal;white-space:nowrap;letter-spacing:0.000px;left:788.30px;transform:translateX(-50%);">5.4993810</span>
<span style="position:absolute;font-family:'Liberation Sans',sans-serif;top:526.30px;font-size:15.00px;line-height:15.00px;color:#1c9220;font-weight:normal;font-style:normal;white-space:nowrap;letter-spacing:0.000px;left:956.80px;transform:translateX(-50%);">2 - Two-Way Roadway</span>
<div style="position:absolute;left:1200px;top:329px;width:18px;height:211px;background:#f1f1f1;"></div>
<div style="position:absolute;left:1203px;top:348px;width:14px;height:110px;background:#c1c1c1;"></div>
<svg style="position:absolute;left:1205px;top:337px" width="9" height="5"><path d="M0 5L4.5 0L9 5Z" fill="#a3a3a3"/></svg>
<svg style="position:absolute;left:1205px;top:528px" width="9" height="5"><path d="M0 0L4.5 5L9 0Z" fill="#505050"/></svg>
<div style="position:absolute;left:76px;top:540px;width:1121px;height:18px;background:#f1f1f1;"></div>
<div style="position:absolute;left:25px;top:540px;width:51px;height:18px;background:#fdfdfd;"></div>
<div style="position:absolute;left:1197px;top:540px;width:22px;height:18px;background:#fdfdfd;"></div>
<div style="position:absolute;left:93px;top:542.6px;width:997px;height:13.4px;background:#c1c1c1;"></div>
<svg style="position:absolute;left:82px;top:545.5px" width="5" height="8"><path d="M4.5 0L0 4L4.5 8Z" fill="#a3a3a3"/></svg>
<svg style="position:absolute;left:1186px;top:545.5px" width="5" height="8"><path d="M0 0L4.5 4L0 8Z" fill="#505050"/></svg>
<div style="position:absolute;left:25px;top:558px;width:1194px;height:28px;background:#e6e6e6;"></div>
<span style="position:absolute;font-family:'Liberation Sans',sans-serif;top:563.60px;font-size:15.00px;line-height:15.00px;color:#333333;font-weight:normal;font-style:normal;white-space:nowrap;letter-spacing:0.008px;left:28.30px;">1 - 9 of 9 results</span>
<svg style="position:absolute;left:1105px;top:569px" width="7" height="10"><path d="M5.5 1L1.5 5L5.5 9" fill="none" stroke="#ababab" stroke-width="2.2"/></svg>
<span style="position:absolute;font-family:'Liberation Sans',sans-serif;top:566.73px;font-size:14.50px;line-height:14.50px;color:#a9a9a9;font-weight:bold;font-style:normal;white-space:nowrap;letter-spacing:-1.078px;left:1121.30px;">1</span>
<svg style="position:absolute;left:1142px;top:569px" width="7" height="10"><path d="M1.5 1L5.5 5L1.5 9" fill="none" stroke="#ababab" stroke-width="2.2"/></svg>
<div style="position:absolute;left:1158px;top:562px;width:54.4px;height:21.6px;border:1px solid #989898;background:#fff;"></div>
<span style="position:absolute;font-family:'Liberation Sans',sans-serif;top:566.30px;font-size:15.00px;line-height:15.00px;color:#2c3e50;font-weight:normal;font-style:normal;white-space:nowrap;letter-spacing:-1.510px;left:1164.00px;">100</span>
<svg style="position:absolute;left:1198px;top:570.5px" width="11.5" height="8" viewBox="0 0 11.5 8"><path d="M1.2 1.2L5.75 6L10.3 1.2" fill="none" stroke="#1f2d3d" stroke-width="2.3"/></svg>
<span style="position:absolute;font-family:'Liberation Sans',sans-serif;top:592.80px;font-size:15.00px;line-height:15.00px;color:#444444;font-weight:normal;font-style:normal;white-space:nowrap;letter-spacing:0.079px;left:1100.80px;">Rows returned: 9</span>
<span style="position:absolute;font-family:'Liberation Sans',sans-serif;top:416.85px;font-size:44.83px;line-height:44.83px;color:#ff0000;font-weight:normal;font-style:normal;white-space:nowrap;letter-spacing:0.000px;transform-origin:0 0;transform:scaleX(0.826);-webkit-text-stroke:0.6px #ff0000;left:688.70px;">3</span>
<div style="position:absolute;left:23px;top:615px;width:1194px;height:61px;border:1px solid #222;"></div>
<div style="position:absolute;left:36px;top:605px;width:98px;height:16px;background:#fbfdfd;"></div>
<span style="position:absolute;font-family:'Liberation Sans',sans-serif;top:607.93px;font-size:14.50px;line-height:14.50px;color:#1b6fd1;font-weight:bold;font-style:normal;white-space:nowrap;letter-spacing:-0.101px;left:39.20px;">Sample Table</span>
<span style="position:absolute;font-family:'Liberation Sans',sans-serif;top:638.43px;font-size:14.50px;line-height:14.50px;color:#444444;font-weight:normal;font-style:normal;white-space:nowrap;letter-spacing:0.258px;left:47.80px;">Required:</span>
<div style="position:absolute;left:118.5px;top:635.4px;width:81.19999999999999px;height:22.0px;border:1px solid #8f8f8f;background:#f6f7f7;box-shadow:0 1px 2px rgba(0,0,0,0.15);"></div>
<span style="position:absolute;font-family:'Liberation Sans',sans-serif;top:640.40px;font-size:15.00px;line-height:15.00px;color:#34495e;font-weight:normal;font-style:normal;white-space:nowrap;letter-spacing:0.000px;right:1050.80px;">3</span>
<span style="position:absolute;font-family:'Liberation Sans',sans-serif;top:638.43px;font-size:14.50px;line-height:14.50px;color:#444444;font-weight:normal;font-style:normal;white-space:nowrap;letter-spacing:0.043px;left:291.80px;">Existing:</span>
<div style="position:absolute;left:353.2px;top:635.4px;width:80.80000000000001px;height:22.0px;border:1px solid #8f8f8f;background:#f6f7f7;box-shadow:0 1px 2px rgba(0,0,0,0.15);"></div>
<span style="position:absolute;font-family:'Liberation Sans',sans-serif;top:640.40px;font-size:15.00px;line-height:15.00px;color:#34495e;font-weight:normal;font-style:normal;white-space:nowrap;letter-spacing:0.000px;right:816.50px;">4</span>
<span style="position:absolute;font-family:'Liberation Sans',sans-serif;top:638.43px;font-size:14.50px;line-height:14.50px;color:#444444;font-weight:normal;font-style:normal;white-space:nowrap;letter-spacing:0.367px;left:529.40px;">Needed:</span>
<div style="position:absolute;left:591px;top:635.4px;width:80.70000000000005px;height:22.0px;border:1px solid #8f8f8f;background:#f6f7f7;box-shadow:0 1px 2px rgba(0,0,0,0.15);"></div>
<span style="position:absolute;font-family:'Liberation Sans',sans-serif;top:640.40px;font-size:15.00px;line-height:15.00px;color:#34495e;font-weight:normal;font-style:normal;white-space:nowrap;letter-spacing:0.000px;right:578.80px;">0</span>
<span style="position:absolute;font-family:'Liberation Sans',sans-serif;top:638.43px;font-size:14.50px;line-height:14.50px;color:#444444;font-weight:normal;font-style:normal;white-space:nowrap;letter-spacing:0.203px;left:767.40px;">Selected:</span>
<div style="position:absolute;left:835px;top:635.4px;width:80.79999999999995px;height:22.0px;border:1px solid #8f8f8f;background:#f6f7f7;box-shadow:0 1px 2px rgba(0,0,0,0.15);"></div>
<span style="position:absolute;font-family:'Liberation Sans',sans-serif;top:640.40px;font-size:15.00px;line-height:15.00px;color:#34495e;font-weight:normal;font-style:normal;white-space:nowrap;letter-spacing:0.000px;right:334.70px;">0</span>
<span style="position:absolute;font-family:'Liberation Sans',sans-serif;top:638.43px;font-size:14.50px;line-height:14.50px;color:#444444;font-weight:normal;font-style:normal;white-space:nowrap;letter-spacing:0.178px;left:1008.40px;">Total Samples:</span>
<div style="position:absolute;left:1111.4px;top:635.4px;width:81.19999999999982px;height:22.0px;border:1px solid #8f8f8f;background:#f6f7f7;box-shadow:0 1px 2px rgba(0,0,0,0.15);"></div>
<span style="position:absolute;font-family:'Liberation Sans',sans-serif;top:640.40px;font-size:15.00px;line-height:15.00px;color:#34495e;font-weight:normal;font-style:normal;white-space:nowrap;letter-spacing:0.000px;right:57.90px;">4</span>
<span style="position:absolute;font-family:'Liberation Sans',sans-serif;top:692.00px;font-size:15.00px;line-height:15.00px;color:#444444;font-weight:normal;font-style:normal;white-space:nowrap;letter-spacing:0.180px;left:21.50px;">Segments shown in <span style="color:#f03c3c">red</span> denote segments that do not meet AADT criteria</span>
<span style="position:absolute;font-family:'Liberation Sans',sans-serif;top:708.00px;font-size:15.00px;line-height:15.00px;color:#444444;font-weight:normal;font-style:normal;white-space:nowrap;letter-spacing:0.208px;left:21.50px;">Segments shown in <span style="color:#f5a623">orange</span> denote segments that do not meet segment length restrictions</span>
<span style="position:absolute;font-family:'Liberation Sans',sans-serif;top:724.00px;font-size:15.00px;line-height:15.00px;color:#444444;font-weight:normal;font-style:normal;white-space:nowrap;letter-spacing:0.103px;left:21.50px;">Segments shown in <span style="color:#1f9a1f">green</span> denote segments that are already samples</span>
<span style="position:absolute;font-family:'Liberation Sans',sans-serif;top:667.85px;font-size:44.83px;line-height:44.83px;color:#ff0000;font-weight:normal;font-style:normal;white-space:nowrap;letter-spacing:0.000px;transform-origin:0 0;transform:scaleX(0.915);-webkit-text-stroke:0.6px #ff0000;left:714.20px;">4</span>
<div style="position:absolute;left:38px;top:766px;width:11px;height:10.6px;border:1px solid #767676;border-radius:2.5px;background:#fff;box-shadow:0 0 3px rgba(0,0,0,0.25);"></div>
<span style="position:absolute;font-family:'Liberation Sans',sans-serif;top:765.70px;font-size:15.00px;line-height:15.00px;color:#444444;font-weight:normal;font-style:normal;white-space:nowrap;letter-spacing:-0.402px;left:64.00px;">Save To Source</span>
<span style="position:absolute;font-family:'Liberation Sans',sans-serif;top:765.70px;font-size:15.00px;line-height:15.00px;color:#3a8ee0;font-weight:normal;font-style:normal;white-space:nowrap;letter-spacing:0.000px;left:169.00px;">?</span>
<div style="position:absolute;left:339.6px;top:768px;width:155.39999999999998px;height:30px;border:1px solid #8e8e8e;background:#eeeeee;"></div>
<span style="position:absolute;font-family:'Liberation Sans',sans-serif;top:776.70px;font-size:15.00px;line-height:15.00px;color:#2c3e50;font-weight:normal;font-style:normal;white-space:nowrap;letter-spacing:-0.120px;left:418.30px;transform:translateX(-50%);">Random Select</span>
<div style="position:absolute;left:526.7px;top:768px;width:155.29999999999995px;height:30px;border:1px solid #d5d5d5;background:#fbfbfb;"></div>
<span style="position:absolute;font-family:'Liberation Sans',sans-serif;top:776.70px;font-size:15.00px;line-height:15.00px;color:#b5b5b5;font-weight:normal;font-style:normal;white-space:nowrap;letter-spacing:-0.111px;left:605.35px;transform:translateX(-50%);">Add Samples</span>
<div style="position:absolute;left:715px;top:768px;width:155.60000000000002px;height:30px;border:1px solid #8e8e8e;background:#eeeeee;"></div>
<span style="position:absolute;font-family:'Liberation Sans',sans-serif;top:776.70px;font-size:15.00px;line-height:15.00px;color:#2c3e50;font-weight:normal;font-style:normal;white-space:nowrap;letter-spacing:-0.284px;left:793.80px;transform:translateX(-50%);">Cancel</span>
<span style="position:absolute;font-family:'Liberation Sans',sans-serif;top:762.97px;font-size:44.69px;line-height:44.69px;color:#ff0000;font-weight:normal;font-style:normal;white-space:nowrap;letter-spacing:0.000px;transform-origin:0 0;transform:scaleX(0.845);-webkit-text-stroke:0.6px #ff0000;left:1022.00px;">5</span>
<svg style="position:absolute;left:1228px;top:796px" width="14" height="14"><path d="M3 13L13 3M7 13L13 7M11 13L13 11" stroke="#9bb0cc" stroke-width="1"/></svg>
<div style="position:absolute;left:15px;top:51px;width:1209px;height:94px;border:2px solid #ff0000;box-shadow:0 0 0 1px rgba(255,0,0,0.28), inset 0 0 0 1px rgba(255,0,0,0.28);"></div>
<div style="position:absolute;left:16px;top:155px;width:1208px;height:132px;border:2px solid #ff0000;box-shadow:0 0 0 1px rgba(255,0,0,0.28), inset 0 0 0 1px rgba(255,0,0,0.28);"></div>
<div style="position:absolute;left:16px;top:287px;width:1208px;height:318px;border:2px solid #ff0000;box-shadow:0 0 0 1px rgba(255,0,0,0.28), inset 0 0 0 1px rgba(255,0,0,0.28);"></div>
<div style="position:absolute;left:16px;top:605px;width:1208px;height:140px;border:2px solid #ff0000;box-shadow:0 0 0 1px rgba(255,0,0,0.28), inset 0 0 0 1px rgba(255,0,0,0.28);"></div>
<div style="position:absolute;left:16px;top:757px;width:1208.5px;height:48px;border:2px solid #ff0000;box-shadow:0 0 0 1px rgba(255,0,0,0.28), inset 0 0 0 1px rgba(255,0,0,0.28);"></div>
</div></body></html>
